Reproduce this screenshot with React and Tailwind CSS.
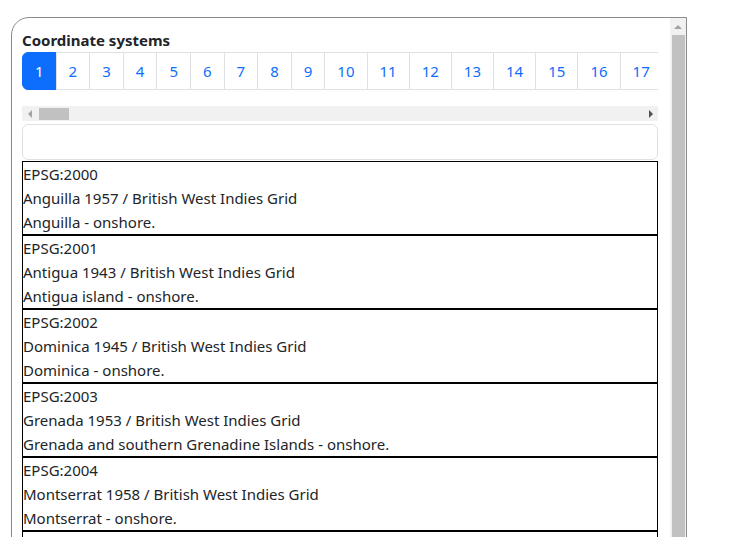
import React from "react";

const items = [
  ["EPSG:2000", "Anguilla 1957 / British West Indies Grid", "Anguilla - onshore."],
  ["EPSG:2001", "Antigua 1943 / British West Indies Grid", "Antigua island - onshore."],
  ["EPSG:2002", "Dominica 1945 / British West Indies Grid", "Dominica - onshore."],
  ["EPSG:2003", "Grenada 1953 / British West Indies Grid", "Grenada and southern Grenadine Islands - onshore."],
  ["EPSG:2004", "Montserrat 1958 / British West Indies Grid", "Montserrat - onshore."],
  ["EPSG:2005", "St. Kitts 1955 / British West Indies Grid", "St Kitts and Nevis - onshore."],
  ["EPSG:2006", "St. Lucia 1955 / British West Indies Grid", "Saint Lucia - onshore."],
];

const pages = Array.from({ length: 17 }, (_, i) => i + 1);

function Tri({ dir, color }) {
  const pts =
    dir === "left"
      ? "5,0 5,8 1,4"
      : dir === "right"
      ? "1,0 1,8 5,4"
      : "0,5 8,5 4,1";
  const w = dir === "up" ? 8 : 6;
  const h = dir === "up" ? 6 : 8;
  return (
    <svg width={w} height={h} viewBox={`0 0 ${w} ${h}`}>
      <polygon points={pts} fill={color} />
    </svg>
  );
}

export default function App() {
  return (
    <div
      className="h-screen overflow-hidden bg-white text-[#212529]"
      style={{ fontFamily: "'Noto Sans', 'Open Sans', sans-serif" }}
    >
      <div className="ml-[11px] mt-[17px] w-[676px] h-[600px] overflow-hidden border border-[#8a8a8a] rounded-tl-[18px] flex">
        <div className="flex-1 min-w-0 pl-[10px] pr-[12px] pt-[10px]">
          <div className="text-[15px] font-bold leading-6">Coordinate systems</div>
          <div className="w-[636px] overflow-hidden">
            <ul className="flex">
              {pages.map((p) => (
                <li key={p} className={p === 1 ? "shrink-0" : "shrink-0 -ml-px"}>
                  <span
                    className={
                      p === 1
                        ? "block px-3 py-1.5 text-[15px] leading-6 border border-[#0d6efd] bg-[#0d6efd] text-white rounded-l-[6px]"
                        : "block px-3 py-1.5 text-[15px] leading-6 border border-[#dee2e6] bg-white text-[#0d6efd]"
                    }
                  >
                    {p}
                  </span>
                </li>
              ))}
            </ul>
          </div>
          {/* horizontal scrollbar */}
          <div className="mt-4 h-[15px] w-[636px] bg-[#f1f1f1] flex items-center">
            <div className="w-[15px] h-[15px] flex items-center justify-center">
              <Tri dir="left" color="#a3a3a3" />
            </div>
            <div className="ml-[2px] w-[30px] h-[12px] bg-[#c1c1c1]"></div>
            <div className="flex-1"></div>
            <div className="w-[15px] h-[15px] flex items-center justify-center">
              <Tri dir="right" color="#505050" />
            </div>
          </div>
          <div className="mt-[3px] h-[36px] border border-[#dee2e6] rounded-[6px]"></div>
          <div className="mt-px">
            {items.map(([code, name, area]) => (
              <div key={code} className="border border-black text-[15px] leading-6 text-[#212529]">
                <div>{code}</div>
                <div>{name}</div>
                <div>{area}</div>
              </div>
            ))}
          </div>
        </div>
        {/* vertical scrollbar */}
        <div className="w-[16px] shrink-0 bg-[#f1f1f1] flex flex-col items-center">
          <div className="h-[17px] w-full flex items-center justify-center">
            <Tri dir="up" color="#a3a3a3" />
          </div>
          <div className="w-[13px] flex-1 bg-[#c1c1c1]"></div>
        </div>
      </div>
    </div>
  );
}
